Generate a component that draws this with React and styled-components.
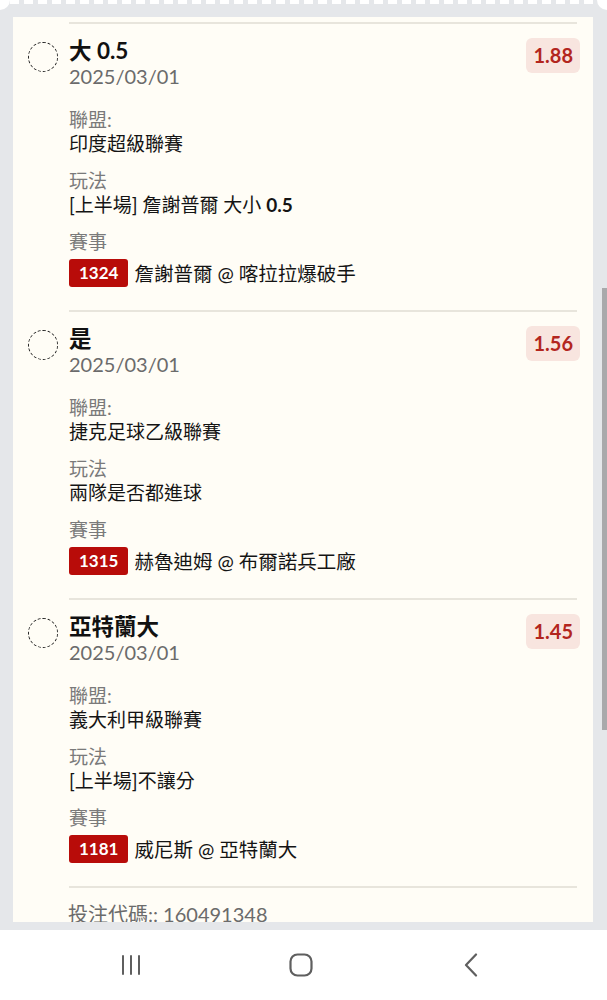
import React from "react";
import styled, { createGlobalStyle } from "styled-components";

const GlobalStyle = createGlobalStyle`
  html, body {
    margin: 0;
    padding: 0;
    background: #e5e7ea;
  }
  * {
    box-sizing: border-box;
  }
`;

const FONT = `"Lato", "Noto Sans CJK TC", "Noto Sans", sans-serif`;

const bets = [
  {
    id: 1,
    title: "大 0.5",
    date: "2025/03/01",
    odds: "1.88",
    league: "印度超級聯賽",
    play: "[上半場] 詹謝普爾 大小 ",
    playBold: "0.5",
    code: "1324",
    match: "詹謝普爾 @ 喀拉拉爆破手",
  },
  {
    id: 2,
    title: "是",
    date: "2025/03/01",
    odds: "1.56",
    league: "捷克足球乙級聯賽",
    play: "兩隊是否都進球",
    code: "1315",
    match: "赫魯迪姆 @ 布爾諾兵工廠",
  },
  {
    id: 3,
    title: "亞特蘭大",
    date: "2025/03/01",
    odds: "1.45",
    league: "義大利甲級聯賽",
    play: "[上半場]不讓分",
    code: "1181",
    match: "威尼斯 @ 亞特蘭大",
  },
];

const Page = styled.div`
  width: 607px;
  height: 1000px;
  display: flex;
  flex-direction: column;
  background: #e5e7ea;
  overflow: hidden;
  font-family: ${FONT};
`;

const TopEdge = styled.div`
  height: 10px;
  display: flex;
  align-items: flex-start;
`;

const Corner = styled.div`
  width: 10px;
  height: 10px;
  background: #ffffff;
  border-bottom-right-radius: ${(p) => (p.$side === "left" ? "10px" : "0")};
  border-bottom-left-radius: ${(p) => (p.$side === "right" ? "10px" : "0")};
`;

const Dashes = styled.div`
  flex: 1;
  height: 4px;
  background: repeating-linear-gradient(
    90deg,
    #ffffff 0 9px,
    #e5e7ea 9px 14px
  );
`;

const Viewport = styled.div`
  flex: 1;
  min-height: 0;
  display: flex;
  padding: 7px 0 8px 13px;
`;

const Card = styled.div`
  flex: 1;
  background: #fffdf6;
  overflow: hidden;
  padding: 5px 16px 0 14px;
`;

const TopRule = styled.div`
  margin-left: 42px;
  height: 2px;
  background: #e8e5dc;
`;

const Item = styled.div`
  display: grid;
  grid-template-columns: 30px 1fr;
  column-gap: 12px;
`;

const Check = styled.div`
  width: 30px;
  height: 30px;
  margin-top: 18px;
  margin-left: 1px;
  border-radius: 50%;
  border: 1.8px dashed #222222;
`;

const Body = styled.div`
  padding: 14px 0 23px;
  border-bottom: 2px solid #e8e5dc;
`;

const Head = styled.div`
  display: flex;
  justify-content: space-between;
  align-items: flex-start;
  margin-right: -3px;
`;

const Title = styled.div`
  font-size: 22.5px;
  line-height: 26px;
  font-weight: 700;
  color: #111111;
`;

const DateText = styled.div`
  font-size: 20px;
  line-height: 25px;
  color: #6b6b6b;
`;

const Odds = styled.div`
  height: 35px;
  line-height: 35px;
  padding: 0 7px;
  border-radius: 6px;
  background: #f8e5df;
  color: #b3261e;
  font-size: 20px;
  font-weight: 700;
`;

const Groups = styled.div`
  margin-top: 19px;
  display: flex;
  flex-direction: column;
  gap: 13px;
`;

const Label = styled.div`
  font-size: 19px;
  line-height: 24px;
  color: #7a7a7a;
`;

const Value = styled.div`
  font-size: 19px;
  line-height: 24px;
  color: #141414;
`;

const MatchRow = styled.div`
  margin-top: 4px;
  display: flex;
  align-items: center;
  gap: 6px;
  font-size: 19.5px;
  color: #141414;
`;

const Code = styled.span`
  display: inline-block;
  height: 28px;
  line-height: 28px;
  padding: 0 10px;
  border-radius: 3px;
  background: #b80c09;
  color: #ffffff;
  font-size: 17px;
  font-weight: 700;
`;

const Footer = styled.div`
  margin-left: 41px;
  padding-top: 14px;
  font-size: 20px;
  line-height: 24px;
  color: #6b6b6b;
`;

const Track = styled.div`
  width: 14px;
  padding: 271px 0 0 9px;
`;

const Thumb = styled.div`
  width: 5px;
  height: 442px;
  background: #a9a9ab;
`;

const NavBar = styled.div`
  height: 70px;
  background: #ffffff;
  display: flex;
  justify-content: center;
  align-items: center;
  gap: 70px;
  padding-right: 6px;
`;

const NavSlot = styled.div`
  width: 100px;
  display: flex;
  justify-content: center;
  color: #5f5f5f;
`;

const RecentIcon = () => (
  <svg width="20" height="22" viewBox="0 0 20 22">
    <g stroke="currentColor" strokeWidth="2" strokeLinecap="round">
      <line x1="2" y1="2" x2="2" y2="20" />
      <line x1="10" y1="2" x2="10" y2="20" />
      <line x1="18" y1="2" x2="18" y2="20" />
    </g>
  </svg>
);

const HomeIcon = () => (
  <svg width="24" height="24" viewBox="0 0 24 24">
    <rect
      x="1.5"
      y="1.5"
      width="21"
      height="21"
      rx="7"
      fill="none"
      stroke="currentColor"
      strokeWidth="2.2"
    />
  </svg>
);

const BackIcon = () => (
  <svg width="16" height="24" viewBox="0 0 16 24">
    <polyline
      points="13,1.5 3,12 13,22.5"
      fill="none"
      stroke="currentColor"
      strokeWidth="2.2"
      strokeLinecap="round"
      strokeLinejoin="round"
    />
  </svg>
);

const BetItem = ({ bet }) => (
  <Item>
    <Check />
    <Body>
      <Head>
        <div>
          <Title>{bet.title}</Title>
          <DateText>{bet.date}</DateText>
        </div>
        <Odds>{bet.odds}</Odds>
      </Head>
      <Groups>
        <div>
          <Label>聯盟:</Label>
          <Value>{bet.league}</Value>
        </div>
        <div>
          <Label>玩法</Label>
          <Value>
            {bet.play}
            {bet.playBold && <b>{bet.playBold}</b>}
          </Value>
        </div>
        <div>
          <Label>賽事</Label>
          <MatchRow>
            <Code>{bet.code}</Code>
            <span>{bet.match}</span>
          </MatchRow>
        </div>
      </Groups>
    </Body>
  </Item>
);

export default function App() {
  return (
    <>
      <GlobalStyle />
      <Page>
        <TopEdge>
          <Corner $side="left" />
          <Dashes />
          <Corner $side="right" />
        </TopEdge>
        <Viewport>
          <Card>
            <TopRule />
            {bets.map((bet) => (
              <BetItem key={bet.id} bet={bet} />
            ))}
            <Footer>投注代碼:: 160491348</Footer>
          </Card>
          <Track>
            <Thumb />
          </Track>
        </Viewport>
        <NavBar>
          <NavSlot>
            <RecentIcon />
          </NavSlot>
          <NavSlot>
            <HomeIcon />
          </NavSlot>
          <NavSlot>
            <BackIcon />
          </NavSlot>
        </NavBar>
      </Page>
    </>
  );
}
